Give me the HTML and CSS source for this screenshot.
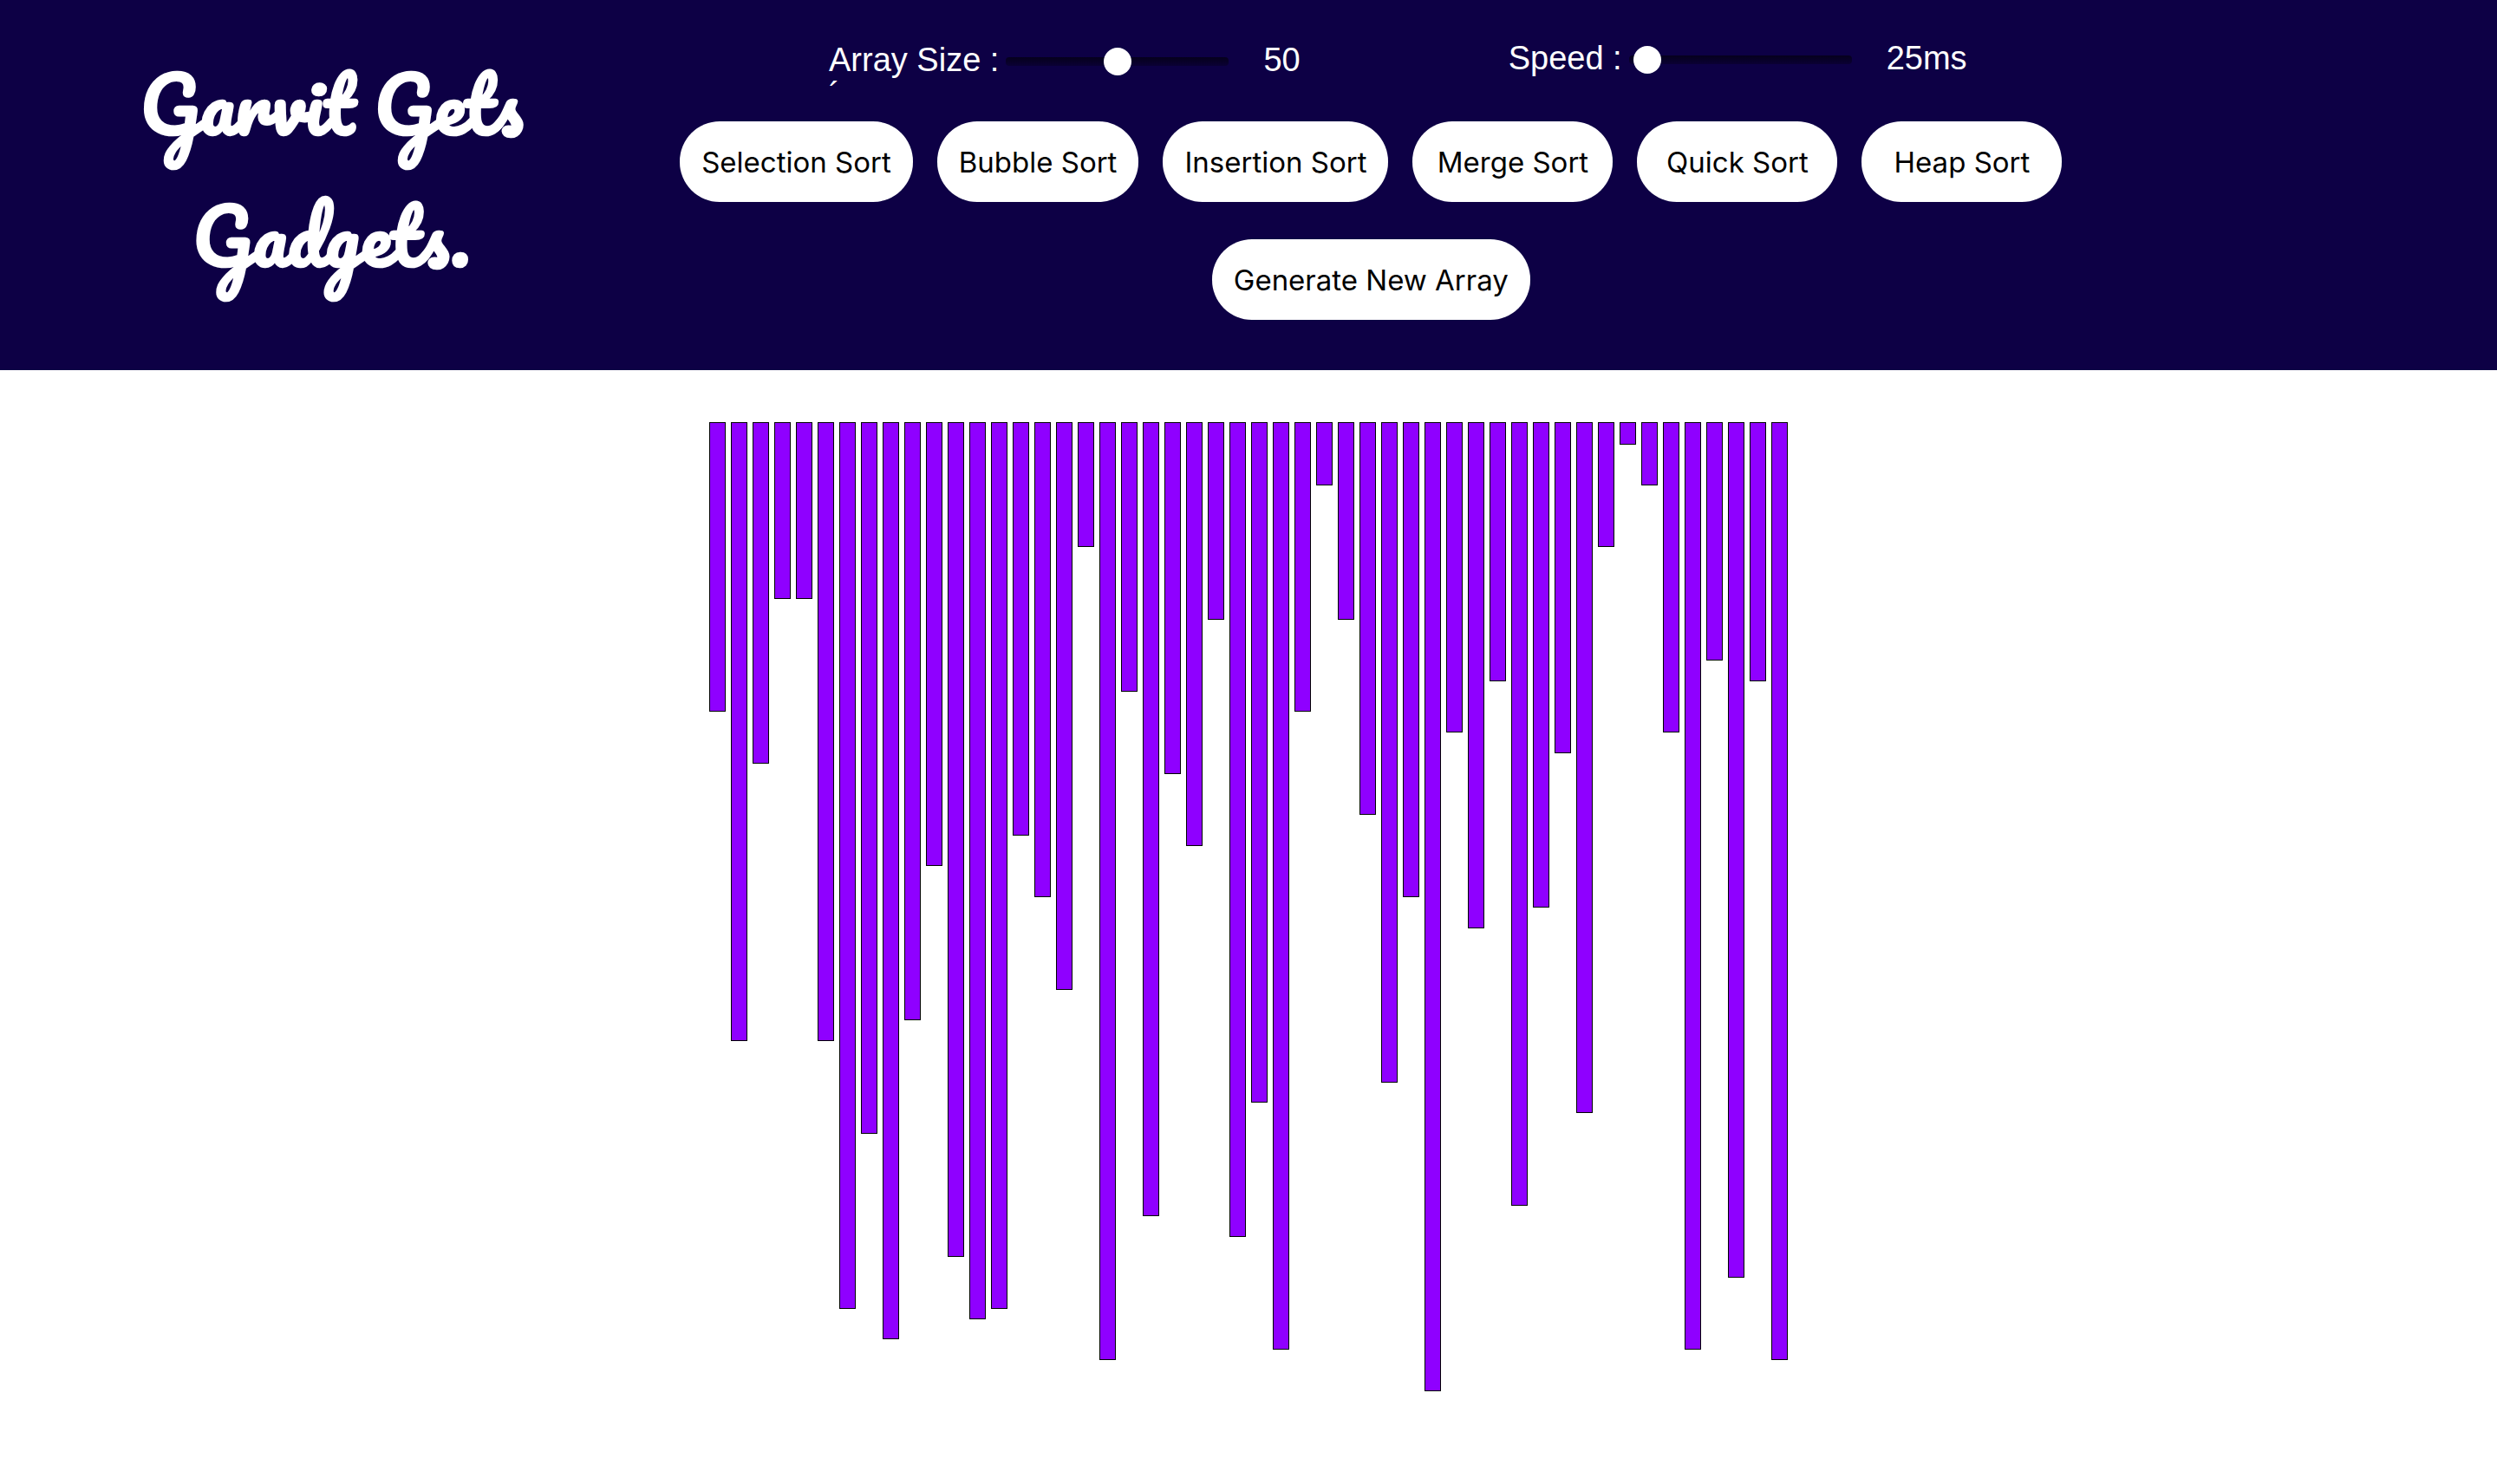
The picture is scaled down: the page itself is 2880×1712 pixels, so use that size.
FILE: index.html
```html
<!DOCTYPE html>
<html lang="en">
<head>
<meta charset="utf-8">
<title>Sorting Visualizer</title>
<link rel="stylesheet" href="styles.css">
</head>
<body>
<header class="header">
  <h1 class="brand">Garvit Gets Gadgets.</h1>
  <div class="panel">
    <div class="sliders">
      <div class="control control-size">
        <label for="size">Array Size :</label>
        <input class="slider" id="size" type="range" min="0" max="100" value="50">
        <output for="size">50</output>
        <span class="stray">´</span>
      </div>
      <div class="control control-speed">
        <label for="speed">Speed :</label>
        <input class="slider" id="speed" type="range" min="0" max="1000" value="25">
        <output for="speed">25ms</output>
      </div>
    </div>
    <div class="buttons">
      <button class="btn" type="button">Selection Sort</button>
      <button class="btn" type="button">Bubble Sort</button>
      <button class="btn" type="button">Insertion Sort</button>
      <button class="btn" type="button">Merge Sort</button>
      <button class="btn" type="button">Quick Sort</button>
      <button class="btn" type="button">Heap Sort</button>
      <button class="btn" type="button">Generate New Array</button>
    </div>
  </div>
</header>
<main class="chart" id="chart"></main>
<script src="script.js"></script>
</body>
</html>
```
FILE: styles.css
```css
* {
  box-sizing: border-box;
}

body {
  margin: 0;
  background: #fff;
  font-family: "Liberation Sans", Arial, sans-serif;
}

.header {
  display: grid;
  grid-template-columns: 47fr 100fr 30fr;
  min-height: 427px;
  padding: 40px 0;
  background: #0d0045;
  color: #fff;
}

.brand {
  margin: 0;
  padding: 4px 120px 0;
  font-family: Pacifico, cursive;
  font-size: 86px;
  font-weight: 700;
  line-height: 152px;
  text-align: center;
}

.panel {
  padding-left: 6px;
}

.sliders {
  display: flex;
  justify-content: center;
  gap: 240px;
  height: 100px;
  padding-left: 62px;
}

.control {
  display: grid;
  grid-template-columns: auto auto auto;
  align-content: start;
  align-items: center;
  column-gap: 8px;
  font-size: 38px;
  line-height: 54px;
}

.control output {
  padding-left: 32px;
}

.control-size {
  padding-top: 2px;
}

.stray {
  line-height: 26px;
}

.slider {
  appearance: none;
  width: 257px;
  height: 10px;
  margin: 4px 0 0;
  border-radius: 4px;
  background: linear-gradient(#05001c, #0a0034);
}

.slider::-webkit-slider-thumb {
  appearance: none;
  width: 32px;
  height: 32px;
  border-radius: 50%;
  background: #fff;
}

.buttons {
  display: flex;
  flex-wrap: wrap;
  justify-content: center;
  gap: 43px 28px;
}

.btn {
  min-width: 231px;
  height: 93px;
  padding: 0 25px;
  border: 0;
  border-radius: 46px;
  background: #fff;
  color: #000;
  font-family: Inter, sans-serif;
  font-size: 33px;
}

.chart {
  display: flex;
  justify-content: center;
  gap: 6px;
  height: 1187px;
  margin-top: 60px;
}

.bar {
  box-sizing: content-box;
  width: 17px;
  border: 1px solid #000;
  background: #8f00ff;
}
```
FILE: script.js
```js
const values = [
  28, 60, 33, 17, 17, 60, 86, 69, 89, 58, 43, 81, 87, 86, 40, 46, 55,
  12, 91, 26, 77, 34, 41, 19, 79, 66, 90, 28, 6, 19, 38, 64, 46, 94,
  30, 49, 25, 76, 47, 32, 67, 12, 2, 6, 30, 90, 23, 83, 25, 91
];
const chart = document.getElementById("chart");
for (const value of values) {
  const bar = document.createElement("div");
  bar.className = "bar";
  bar.style.height = value + "%";
  chart.append(bar);
}
```
